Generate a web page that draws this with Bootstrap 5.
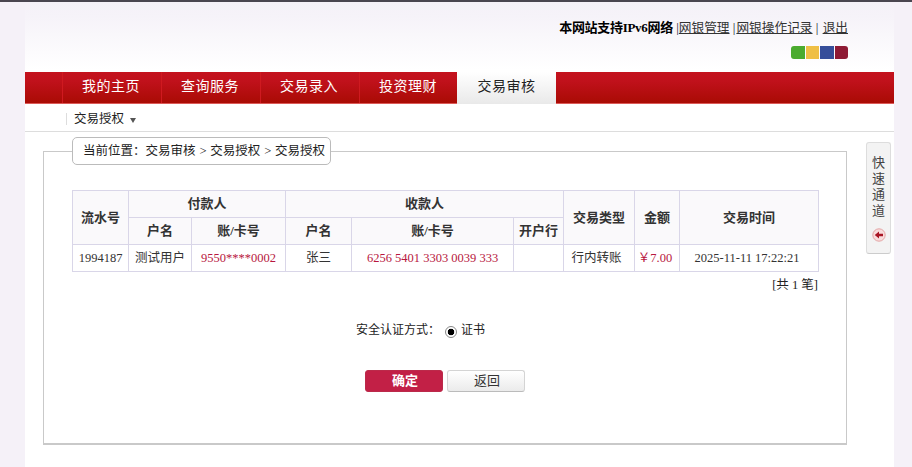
<!DOCTYPE html>
<html lang="zh-CN">
<head>
    <meta charset="UTF-8">
    <title>交易授权</title>
    <link href="https://cdn.jsdelivr.net/npm/bootstrap@5.3.0/dist/css/bootstrap.min.css" rel="stylesheet">
    <style>
        html, body { height: 467px; overflow: hidden; }
        body {
            background: #f5f1f8;
            border-top: 2px solid #4a4650;
            font-family: "Liberation Serif", "Noto Sans CJK SC", serif;
            font-size: 12.5px;
            color: #222;
        }
        .page-wrap {
            position: relative;
            width: 869px;
            height: 465px;
            margin-left: 25px;
            background: #fff;
        }
        .top-head {
            height: 70px;
            padding: 17px 46px 0 0;
            background: linear-gradient(#f5f1f8 0, #f6f3f9 15px, #fff 68px);
        }
        .top-links { font-size: 13px; line-height: 18px; color: #222; }
        .top-links b { letter-spacing: -.3px; color: #000; }
        .top-links a { color: #333; margin-left: 1px; font-size: 12.7px; }
        .top-links a:first-of-type { margin-left: 0; }
        .skin-dots { gap: 1px; margin-top: 9px; height: 13px; }
        .skin-dots span { width: 13.5px; height: 13px; }
        .skin-dots span:first-child { border-radius: 3px 0 0 3px; }
        .skin-dots span:last-child { border-radius: 0 3px 3px 0; }
        .dot-green { background: #4bab2f; }
        .dot-yellow { background: #efbf45; }
        .dot-blue { background: #364e9a; }
        .dot-maroon { background: #8e1a35; }
        .main-menu {
            height: 32px;
            padding-left: 37px;
            background: linear-gradient(#c4121d, #c0111b 30%, #a90b04);
            border-bottom: 1px solid #dc5a58;
        }
        .main-menu a {
            width: 99px;
            padding-right: 2px;
            line-height: 30px;
            text-align: center;
            color: #fff;
            font-size: 14px;
            letter-spacing: .5px;
            text-decoration: none;
            border-left: 1px solid #cf1a20;
        }
        .main-menu a.is-on {
            height: 32px;
            margin-left: -1px;
            margin-bottom: -1px;
            padding-right: 0;
            color: #222;
            border-left: 0;
            background: linear-gradient(#fff, #e9e9e9);
        }
        .sub-menu {
            height: 28px;
            padding: 0 0 0 41px;
            border-bottom: 1px solid #ddd;
        }
        .sub-menu a {
            color: #222;
            text-decoration: none;
            border-left: 1px solid #ddd;
            line-height: 12px;
            padding-left: 7px;
            margin-top: 2px;
        }
        .sub-caret {
            width: 0;
            height: 0;
            margin: 5px 0 0 6px;
            border: 3px solid transparent;
            border-top: 5px solid #555;
            border-bottom: 0;
        }
        .main-box {
            width: 804px;
            height: 294px;
            margin: 19px 0 0 18px;
            padding: 0 28px;
            border: 1px solid #c9c9c9;
            border-bottom-width: 2px;
        }
        .where-box {
            width: 259px;
            height: 28px;
            margin: -15px 0 25px 0;
            padding-left: 10px;
            line-height: 26px;
            word-spacing: .75px;
            background: #fff;
            border: 1px solid #bbb;
            border-radius: 5px;
        }
        .pay-table {
            width: 746px;
            margin: 0;
            table-layout: fixed;
            font-size: 12.5px;
        }
        .pay-table col:nth-child(1) { width: 56px; }
        .pay-table col:nth-child(2) { width: 63px; }
        .pay-table col:nth-child(3) { width: 94px; }
        .pay-table col:nth-child(4) { width: 66px; }
        .pay-table col:nth-child(5) { width: 162px; }
        .pay-table col:nth-child(6) { width: 50px; }
        .pay-table col:nth-child(7) { width: 71px; }
        .pay-table col:nth-child(8) { width: 45px; }
        .pay-table col:nth-child(9) { width: 139px; }
        .pay-table > :not(caption) > * > * {
            height: 27px;
            padding: 0;
            text-align: center;
            vertical-align: middle;
            border: 1px solid #d9d6e8;
            box-shadow: none;
            color: #333;
        }
        .pay-table > thead > tr > th {
            background: #faf9fb;
            font-size: 13px;
            font-weight: bold;
        }
        .pay-table > tbody > tr > td.txt-red { color: #b8173e; }
        .pay-table > tbody > tr > td.txt-type { padding-right: 5px; }
        .pay-table > tbody > tr > td.txt-sum { padding-right: 4px; }
        .pay-table > tbody > tr > td.txt-time { padding-right: 4px; }
        .count-line { margin-top: 5px; line-height: 16px; }
        .auth-line { margin-top: 28px; font-size: 12px; line-height: 18px; gap: 4px; padding-right: 49px; }
        .auth-line span:first-child { margin-right: 1px; }
        .auth-radio {
            appearance: none;
            width: 12px;
            height: 12px;
            margin-top: 5px;
            border: 1px solid #888;
            border-radius: 50%;
            background: radial-gradient(circle, #000 0, #000 3px, #fff 3.6px);
        }
        .btn-row { margin-top: 31px; gap: 4px; padding-right: 1px; }
        .btn-ok, .btn-ok:hover {
            width: 78px;
            height: 22px;
            padding: 0 0 0 3px;
            font-size: 13px;
            font-weight: bold;
            line-height: 20px;
            color: #fff;
            background: #c22046;
            border: 1px solid #bb2a4a;
            border-radius: 3px;
        }
        .btn-back, .btn-back:hover {
            width: 78px;
            height: 22px;
            padding: 0 0 0 3px;
            font-size: 13px;
            line-height: 20px;
            color: #333;
            background: linear-gradient(#fff, #ebebeb);
            border: 1px solid #d4d4d4;
            border-bottom-color: #bbb;
            border-radius: 3px;
        }
        .quick-tab {
            position: absolute;
            top: 140px;
            left: 841px;
            width: 25px;
            height: 112px;
            padding-top: 12px;
            text-align: center;
            font-size: 13px;
            line-height: 16px;
            color: #444;
            background: #f3f3f3;
            border: 1px solid #ddd;
            border-bottom-color: #ccc;
            border-radius: 3px;
        }
        .quick-tab svg { margin-top: 9px; }
    </style>
</head>
<body>
    <div class="page-wrap">
        <div class="top-head">
            <div class="top-links text-end">
                <b>本网站支持IPv6网络</b> |<a href="#">网银管理</a> |<a href="#">网银操作记录</a> | <a href="#">退出</a>
            </div>
            <div class="skin-dots d-flex justify-content-end">
                <span class="dot-green"></span>
                <span class="dot-yellow"></span>
                <span class="dot-blue"></span>
                <span class="dot-maroon"></span>
            </div>
        </div>

        <nav class="main-menu d-flex">
            <a href="#">我的主页</a>
            <a href="#">查询服务</a>
            <a href="#">交易录入</a>
            <a href="#">投资理财</a>
            <a href="#" class="is-on">交易审核</a>
        </nav>

        <div class="sub-menu d-flex align-items-center">
            <a href="#">交易授权</a>
            <span class="sub-caret"></span>
        </div>

        <div class="main-box">
            <div class="where-box">当前位置：交易审核 &gt; 交易授权 &gt; 交易授权</div>

            <table class="table table-bordered pay-table">
                <colgroup><col><col><col><col><col><col><col><col><col></colgroup>
                <thead>
                    <tr>
                        <th rowspan="2">流水号</th>
                        <th colspan="2">付款人</th>
                        <th colspan="3">收款人</th>
                        <th rowspan="2">交易类型</th>
                        <th rowspan="2">金额</th>
                        <th rowspan="2">交易时间</th>
                    </tr>
                    <tr>
                        <th>户名</th>
                        <th>账/卡号</th>
                        <th>户名</th>
                        <th>账/卡号</th>
                        <th>开户行</th>
                    </tr>
                </thead>
                <tbody>
                    <tr>
                        <td>1994187</td>
                        <td>测试用户</td>
                        <td class="txt-red">9550****0002</td>
                        <td>张三</td>
                        <td class="txt-red">6256 5401 3303 0039 333</td>
                        <td></td>
                        <td class="txt-type">行内转账</td>
                        <td class="txt-red txt-sum">￥7.00</td>
                        <td class="txt-time">2025-11-11 17:22:21</td>
                    </tr>
                </tbody>
            </table>
            <div class="count-line text-end">[共 1 笔]</div>

            <div class="auth-line d-flex justify-content-center">
                <span>安全认证方式：</span>
                <input type="radio" class="auth-radio" name="auth" checked>
                <span>证书</span>
            </div>

            <div class="btn-row d-flex justify-content-center">
                <button type="button" class="btn btn-ok">确定</button>
                <button type="button" class="btn btn-back">返回</button>
            </div>
        </div>

        <div class="quick-tab">
            快<br>速<br>通<br>道
            <svg width="14" height="14" viewBox="0 0 14 14" class="d-block mx-auto">
                <circle cx="7" cy="7" r="6.2" fill="#f8dcdc" stroke="#e3a5a5"/>
                <path d="M2.8 7 7 3.5V5.7H11V8.3H7V10.5Z" fill="#a81524"/>
            </svg>
        </div>
    </div>
    <script src="https://cdn.jsdelivr.net/npm/bootstrap@5.3.0/dist/js/bootstrap.bundle.min.js"></script>
</body>
</html>
